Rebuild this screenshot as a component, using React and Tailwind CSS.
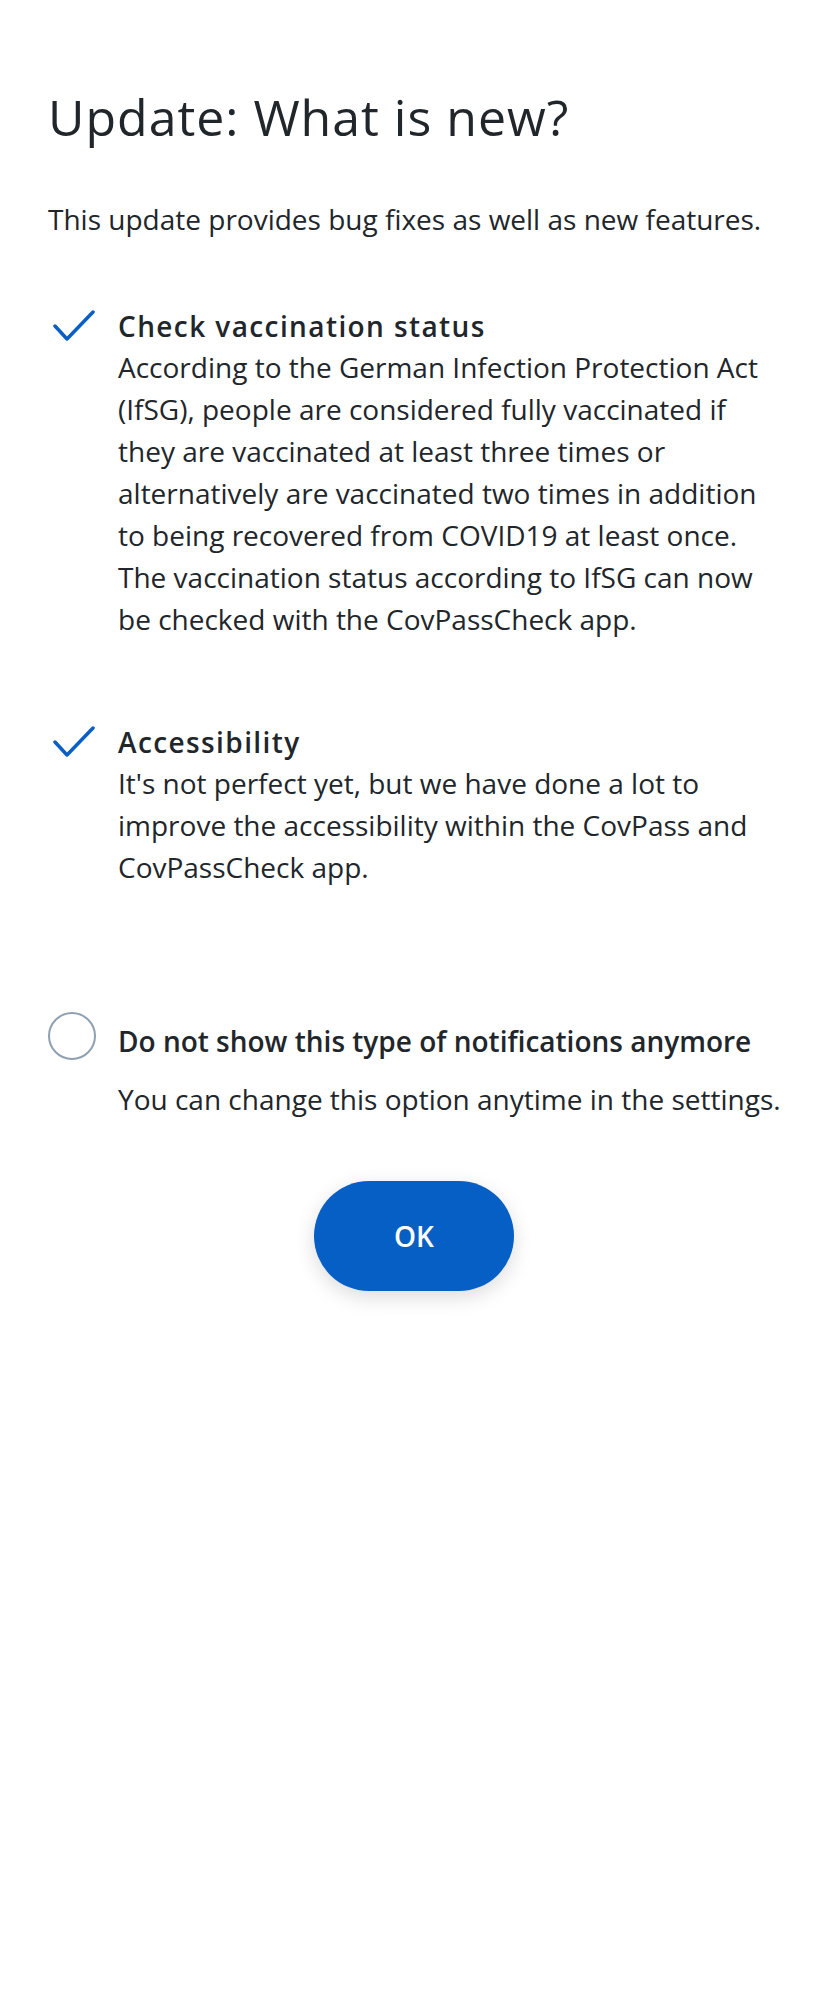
import React from "react";

const Check = () => (
  <svg width="42" height="32" viewBox="0 0 42 32" fill="none" className="block">
    <path d="M2 16 L14 29 L40 2" stroke="#0a5fc4" strokeWidth="3.5" strokeLinecap="round" strokeLinejoin="round" />
  </svg>
);

function Feature({ title, children, className = "" }) {
  return (
    <div className={`flex ${className}`}>
      <div className="w-[70px] shrink-0 pl-[5px] pt-[4px]">
        <Check />
      </div>
      <div className="flex-1">
        <h2 className="text-[28px] leading-[40px] font-semibold tracking-[1.4px] text-[#21262b]">{title}</h2>
        <p className="text-[28px] leading-[42px] text-[#21262b]">{children}</p>
      </div>
    </div>
  );
}

export default function App() {
  return (
    <div className="w-[828px] min-h-[2000px] bg-white px-[48px] pt-[85px]" style={{ fontFamily: "'Open Sans', 'Noto Sans', sans-serif" }}>
      {/* Header */}
      <h1 className="text-[50px] leading-[64px] tracking-[1px] text-[#21262b]">Update: What is new?</h1>
      <p className="mt-[49px] text-[28px] leading-[42px] text-[#21262b]">
        This update provides bug fixes as well as new features.
      </p>

      {/* Features */}
      <Feature title="Check vaccination status" className="mt-[66px]">
        According to the German Infection Protection Act (IfSG), people are considered fully vaccinated if they are vaccinated at least three times or alternatively are vaccinated two times in addition to being recovered from COVID19 at least once. The vaccination status according to IfSG can now be checked with the CovPassCheck app.
      </Feature>
      <Feature title="Accessibility" className="mt-[82px]">
        It's not perfect yet, but we have done a lot to improve the accessibility within the CovPass and CovPassCheck app.
      </Feature>

      {/* Opt-out */}
      <div className="mt-[124px] flex">
        <div className="w-[70px] shrink-0">
          <div className="w-[48px] h-[48px] rounded-full border-2 border-[#8fa0b3]" />
        </div>
        <div className="flex-1 pt-[8px]">
          <p className="text-[28px] leading-[42px] font-semibold text-[#21262b]">Do not show this type of notifications anymore</p>
          <p className="mt-[16px] text-[28px] leading-[42px] text-[#21262b] whitespace-nowrap">You can change this option anytime in the settings.</p>
        </div>
      </div>

      <div className="mt-[61px] flex justify-center">
        <button className="w-[200px] h-[110px] rounded-full bg-[#065fc4] text-white text-[28px] font-semibold shadow-[0_6px_20px_rgba(0,0,0,0.14)]">
          OK
        </button>
      </div>
    </div>
  );
}
